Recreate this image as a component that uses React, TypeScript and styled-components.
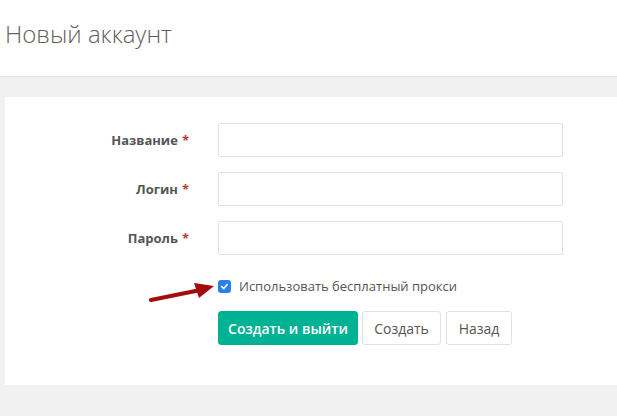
import React from "react";
import styled, { createGlobalStyle } from "styled-components";

const Global = createGlobalStyle`
  html, body { margin: 0; padding: 0; }
  body {
    background: #f1f1f1;
    font-family: "Open Sans", "Noto Sans", sans-serif;
    color: #555;
    height: 416px;
    overflow: hidden;
  }
`;

const Header = styled.header`
  height: 77px;
  background: #fff;
  border-bottom: 1px solid #e4e4e4;
  box-sizing: border-box;
  display: flex;
  align-items: flex-start;
  padding: 17px 0 0 5px;
`;

const Title = styled.h1`
  margin: 0;
  font-size: 24px;
  font-weight: 300;
  color: #5f5f5f;
  line-height: 34px;
`;

const Main = styled.main`
  padding: 20px 0 0 5px;
`;

const Panel = styled.section`
  position: relative;
  background: #fff;
  height: 288px;
  box-sizing: border-box;
  padding-top: 26px;
`;

const Form = styled.form`
  display: grid;
  grid-template-columns: 184px 345px;
  column-gap: 29px;
  row-gap: 15px;
  align-items: center;
`;

const Label = styled.label`
  text-align: right;
  font-size: 13px;
  font-weight: 700;
  color: #555;
`;

const Req = styled.span`
  color: #c0392b;
  margin-left: 4px;
`;

const Input = styled.input`
  height: 34px;
  box-sizing: border-box;
  border: 1px solid #e1e1e1;
  border-radius: 2px;
  background: #fff;
  width: 100%;
  outline: none;
`;

const CheckRow = styled.div`
  grid-column: 2;
  display: flex;
  align-items: center;
  gap: 8px;
  margin-top: 7px;
  font-size: 13px;
  color: #555;
`;

const Box = styled.span`
  width: 13px;
  height: 13px;
  border-radius: 3px;
  background: #2d7ff0;
  display: inline-flex;
  align-items: center;
  justify-content: center;
`;

const Buttons = styled.div`
  grid-column: 2;
  display: flex;
  gap: 4px;
  margin-top: 1px;
`;

const Btn = styled.button<{ $primary?: boolean; $w: number }>`
  height: 34px;
  width: ${(p) => p.$w}px;
  box-sizing: border-box;
  border-radius: 3px;
  font-family: "Open Sans", "Noto Sans", sans-serif;
  font-size: 14px;
  font-weight: ${(p) => (p.$primary ? 600 : 400)};
  color: ${(p) => (p.$primary ? "#fff" : "#555")};
  background: ${(p) => (p.$primary ? "#00b193" : "#fff")};
  border: 1px solid ${(p) => (p.$primary ? "#00b193" : "#e1e1e1")};
  padding: 0;
  cursor: pointer;
`;

const Arrow = styled.svg`
  position: absolute;
  left: 135px;
  top: 178px;
`;

export default function App() {
  return (
    <>
      <Global />
      <Header>
        <Title>Новый аккаунт</Title>
      </Header>
      <Main>
        <Panel>
          <Form>
            <Label>
              Название<Req>*</Req>
            </Label>
            <Input />
            <Label>
              Логин<Req>*</Req>
            </Label>
            <Input />
            <Label>
              Пароль<Req>*</Req>
            </Label>
            <Input />
            <CheckRow>
              <Box>
                <svg width="9" height="9" viewBox="0 0 10 10">
                  <path d="M2 5.2 L4.2 7.3 L8 2.8" fill="none" stroke="#fff" strokeWidth="1.8" strokeLinecap="round" strokeLinejoin="round" />
                </svg>
              </Box>
              Использовать бесплатный прокси
            </CheckRow>
            <Buttons>
              <Btn $primary $w={140}>Создать и выйти</Btn>
              <Btn $w={79}>Создать</Btn>
              <Btn $w={66} style={{ marginLeft: 1 }}>Назад</Btn>
            </Buttons>
          </Form>
          <Arrow width="80" height="30" viewBox="0 0 80 30">
            <path d="M11 25 L58 15.5" stroke="#a30c0c" strokeWidth="4" strokeLinecap="round" />
            <path d="M74 11 L54 8 L59 23 Z" fill="#a30c0c" />
          </Arrow>
        </Panel>
      </Main>
    </>
  );
}
